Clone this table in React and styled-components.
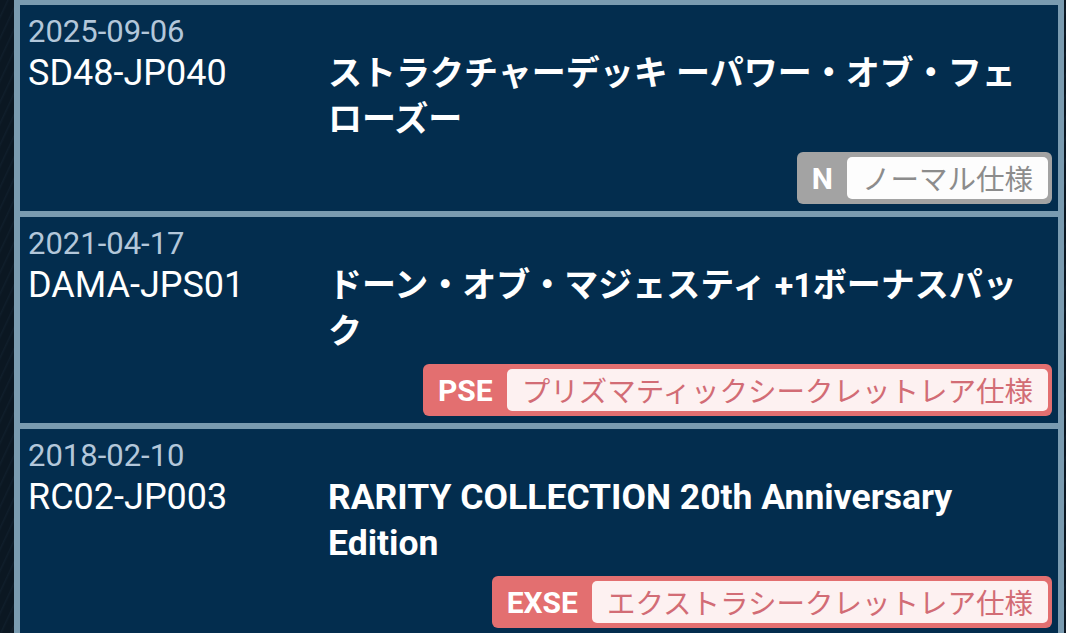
import styled, { createGlobalStyle } from 'styled-components'

const GlobalStyle = createGlobalStyle`
  html, body {
    margin: 0;
    padding: 0;
    background: #0b1722;
    font-family: Roboto, 'Noto Sans CJK JP', sans-serif;
    overflow: hidden;
  }
`

const Page = styled.div`
  display: flex;
  padding-left: 14px;
  min-height: 633px;
  background: repeating-linear-gradient(115deg, #0b1722 0px, #0b1722 6px, #101e2b 7px, #0b1722 9px);
`

const List = styled.div`
  width: 1050px;
  display: flex;
  flex-direction: column;
  gap: 6px;
  padding: 5px 6px 0 6px;
  box-sizing: border-box;
  background: #7a9bb0;
`

const Card = styled.div`
  background: #032d4e;
  display: grid;
  grid-template-columns: 300px 1fr;
  grid-template-rows: auto auto 1fr;
  grid-template-areas:
    'date .'
    'code title'
    'badge badge';
  padding: 9px 6px 7px 8px;
  height: 206px;
  box-sizing: border-box;
`

const ReleaseDate = styled.div`
  grid-area: date;
  font-size: 31px;
  line-height: 36px;
  color: #b3c7da;
`

const CardCode = styled.div`
  grid-area: code;
  font-size: 36px;
  line-height: 46px;
  color: #ffffff;
`

const Title = styled.div`
  grid-area: title;
  max-width: 704px;
  font-size: ${props => (props.$latin ? 35.5 : 34)}px;
  line-height: 46px;
  font-weight: 700;
  color: #ffffff;
`

const Rarity = styled.div`
  grid-area: badge;
  justify-self: end;
  align-self: end;
  display: flex;
  align-items: center;
  gap: 14px;
  padding: 5px 4px 5px 15px;
  border-radius: 6px;
  background: ${props => props.color};
`

const RarityCode = styled.span`
  font-size: 30px;
  font-weight: 700;
  color: #ffffff;
`

const RarityName = styled.span`
  background: ${props => props.bg};
  color: ${props => props.color};
  font-family: 'Noto Sans CJK JP', sans-serif;
  font-size: 28.5px;
  line-height: 42px;
  padding: 0 15px;
  border-radius: 5px;
`

const rarities = {
  N: { color: '#a3a3a3', bg: '#fdfdfd', text: '#8c8c8c' },
  red: { color: '#e36f70', bg: '#fdf1f1', text: '#d26c75' }
}

const items = [
  {
    date: '2025-09-06',
    code: 'SD48-JP040',
    title: 'ストラクチャーデッキ ーパワー・オブ・フェローズー',
    rarity: 'N',
    rarityName: 'ノーマル仕様',
    tone: 'N'
  },
  {
    date: '2021-04-17',
    code: 'DAMA-JPS01',
    title: 'ドーン・オブ・マジェスティ +1ボーナスパック',
    rarity: 'PSE',
    rarityName: 'プリズマティックシークレットレア仕様',
    tone: 'red'
  },
  {
    date: '2018-02-10',
    code: 'RC02-JP003',
    title: 'RARITY COLLECTION 20th Anniversary Edition',
    latin: true,
    rarity: 'EXSE',
    rarityName: 'エクストラシークレットレア仕様',
    tone: 'red'
  }
]

const App = () => {
  return (
    <>
      <GlobalStyle />
      <Page>
        <List>
          {items.map(item => {
            const tone = rarities[item.tone]
            return (
              <Card key={item.code}>
                <ReleaseDate>{item.date}</ReleaseDate>
                <CardCode>{item.code}</CardCode>
                <Title $latin={item.latin}>{item.title}</Title>
                <Rarity color={tone.color}>
                  <RarityCode>{item.rarity}</RarityCode>
                  <RarityName bg={tone.bg} color={tone.text}>{item.rarityName}</RarityName>
                </Rarity>
              </Card>
            )
          })}
        </List>
      </Page>
    </>
  )
}

export default App
